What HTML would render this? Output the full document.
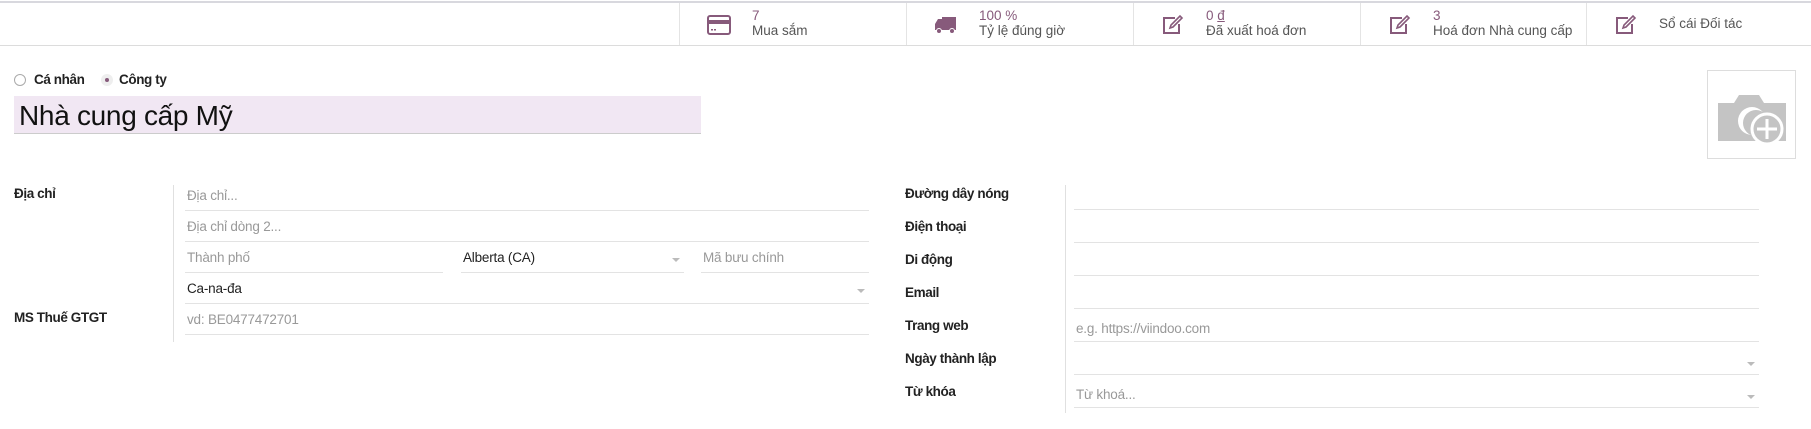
<!DOCTYPE html>
<html><head><meta charset="utf-8"><style>
*{box-sizing:border-box;margin:0;padding:0}
body{width:1811px;height:429px;background:#fff;font-family:"Liberation Sans",sans-serif;color:#222;position:relative;overflow:hidden;font-size:14px}
.a{position:absolute}
.bar{left:0;top:1px;width:1811px;height:45px;border-top:2px solid #d8d8de;border-bottom:1px solid #dcdcdc}
.btn{top:3px;height:42px;width:227px;border-left:1px solid #e4e4e4}
.btn .t{position:absolute;left:72px;top:5px;line-height:15px;font-size:13.5px;color:#555}
.btn .t b{display:block;color:#875a7b;font-weight:normal}
.btn svg{position:absolute;left:27px;top:11px}
.lbl{font-weight:bold;font-size:13.5px;color:#222;letter-spacing:-0.4px}
.f{border-bottom:1px solid #e3e3e3;height:27px;font-size:13.5px;color:#999;padding:4px 0 0 2px;letter-spacing:-0.2px}
.f.v{color:#222}
.arr{position:absolute;right:4px;top:12px;width:0;height:0;border-left:4px solid transparent;border-right:4px solid transparent;border-top:4px solid #bbb}
</style></head><body>
<div class="a bar"></div>
<div class="a btn" style="left:679px"><svg width="24" height="22" viewBox="0 0 24 22"><rect x="1" y="2" width="22" height="18" rx="2" fill="none" stroke="#875a7b" stroke-width="2"/><rect x="1" y="6" width="22" height="4" fill="#875a7b"/><rect x="4" y="15" width="2" height="1.5" fill="#875a7b"/><rect x="7" y="15" width="2" height="1.5" fill="#875a7b"/></svg><div class="t"><b>7</b>Mua sắm</div></div>
<div class="a btn" style="left:906px"><svg width="24" height="22" viewBox="0 0 24 22"><rect x="8" y="3" width="14" height="13" fill="#875a7b"/><path d="M1 10 L4 5 H8 V16 H1 Z" fill="#875a7b"/><circle cx="5" cy="17" r="2.5" fill="#875a7b" stroke="#fff"/><circle cx="18" cy="17" r="2.5" fill="#875a7b" stroke="#fff"/></svg><div class="t"><b>100 %</b>Tỷ lệ đúng giờ</div></div>
<div class="a btn" style="left:1133px"><svg width="24" height="22" viewBox="0 0 24 22"><path d="M14 4 H3 V19 H18 V10" fill="none" stroke="#875a7b" stroke-width="2"/><path d="M9 14 L10 11 L19 2 L21 4 L12 13 Z" fill="none" stroke="#875a7b" stroke-width="1.6"/></svg><div class="t"><b>0 <u>đ</u></b>Đã xuất hoá đơn</div></div>
<div class="a btn" style="left:1360px"><svg width="24" height="22" viewBox="0 0 24 22"><path d="M14 4 H3 V19 H18 V10" fill="none" stroke="#875a7b" stroke-width="2"/><path d="M9 14 L10 11 L19 2 L21 4 L12 13 Z" fill="none" stroke="#875a7b" stroke-width="1.6"/></svg><div class="t"><b>3</b>Hoá đơn Nhà cung cấp</div></div>
<div class="a btn" style="left:1586px;width:225px"><svg width="24" height="22" viewBox="0 0 24 22"><path d="M14 4 H3 V19 H18 V10" fill="none" stroke="#875a7b" stroke-width="2"/><path d="M9 14 L10 11 L19 2 L21 4 L12 13 Z" fill="none" stroke="#875a7b" stroke-width="1.6"/></svg><div class="t" style="top:13px">Sổ cái Đối tác</div></div>

<div class="a" style="left:14px;top:74px;width:12px;height:12px;border:1px solid #aaa;border-radius:50%"></div>
<div class="a lbl" style="left:34px;top:72px">Cá nhân</div>
<div class="a" style="left:101px;top:74px;width:12px;height:12px;border-radius:50%;background:#eee"><div style="margin:4px;width:4px;height:4px;border-radius:50%;background:#875a7b"></div></div>
<div class="a lbl" style="left:119px;top:72px">Công ty</div>
<div class="a" style="left:14px;top:96px;width:687px;height:38px;background:#f1e7f3;border-bottom:1px solid #ccc;font-size:28px;padding:4px 0 0 5px;color:#111;letter-spacing:-0.3px">Nhà cung cấp Mỹ</div>

<div class="a" style="left:1707px;top:70px;width:89px;height:89px;border:1px solid #ddd">
<svg width="89" height="89" viewBox="0 0 89 89"><path d="M10 32 H26 L31 24 H51 L56 32 H78 V70 H10 Z" fill="#c4c4c4"/><circle cx="44" cy="50" r="14" fill="#fff"/><circle cx="48" cy="52" r="13" fill="#c4c4c4"/><circle cx="59" cy="58" r="15" fill="#c4c4c4" stroke="#fff" stroke-width="3"/><path d="M59 48 V68 M49 58 H69" stroke="#fff" stroke-width="3"/></svg></div>

<div class="a lbl" style="left:14px;top:186px">Địa chỉ</div>
<div class="a lbl" style="left:14px;top:310px">MS Thuế GTGT</div>
<div class="a" style="left:173px;top:185px;width:1px;height:157px;background:#e0e0e0"></div>
<div class="a f" style="left:185px;top:184px;width:684px">Địa chỉ...</div>
<div class="a f" style="left:185px;top:215px;width:684px">Địa chỉ dòng 2...</div>
<div class="a f" style="left:185px;top:246px;width:258px">Thành phố</div>
<div class="a f v" style="left:461px;top:246px;width:223px">Alberta (CA)<span class="arr"></span></div>
<div class="a f" style="left:701px;top:246px;width:168px">Mã bưu chính</div>
<div class="a f v" style="left:185px;top:277px;width:684px">Ca-na-đa<span class="arr"></span></div>
<div class="a f" style="left:185px;top:308px;width:684px">vd: BE0477472701</div>

<div class="a lbl" style="left:905px;top:186px">Đường dây nóng</div>
<div class="a lbl" style="left:905px;top:219px">Điện thoại</div>
<div class="a lbl" style="left:905px;top:252px">Di động</div>
<div class="a lbl" style="left:905px;top:285px">Email</div>
<div class="a lbl" style="left:905px;top:318px">Trang web</div>
<div class="a lbl" style="left:905px;top:351px">Ngày thành lập</div>
<div class="a lbl" style="left:905px;top:384px">Từ khóa</div>
<div class="a" style="left:1065px;top:185px;width:1px;height:228px;background:#e0e0e0"></div>
<div class="a f" style="left:1074px;top:183px;width:685px"></div>
<div class="a f" style="left:1074px;top:216px;width:685px"></div>
<div class="a f" style="left:1074px;top:249px;width:685px"></div>
<div class="a f" style="left:1074px;top:282px;width:685px"></div>
<div class="a f" style="left:1074px;top:315px;width:685px;padding-top:6px">e.g. https://viindoo.com</div>
<div class="a f" style="left:1074px;top:348px;width:685px"><span class="arr" style="top:14px"></span></div>
<div class="a f" style="left:1074px;top:381px;width:685px;padding-top:6px">Từ khoá...<span class="arr" style="top:14px"></span></div>
</body></html>
